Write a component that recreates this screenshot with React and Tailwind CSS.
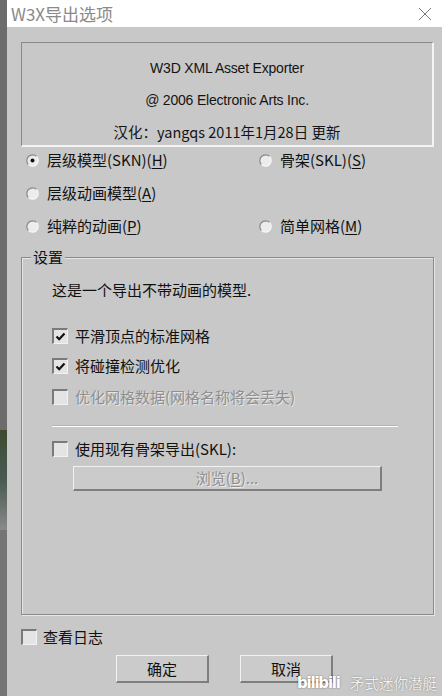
import React from "react";

const cjk = "font-['Noto_Sans_CJK_SC','Noto_Sans',sans-serif]";

const Radio = ({ checked }) => (
  <svg width="13" height="13" viewBox="0 0 13 13" className="shrink-0">
    <circle cx="6.5" cy="6.5" r="5.5" fill="#ececec" />
    <path d="M10.6 2.4 A5.8 5.8 0 0 0 2.4 10.6" stroke="#8a8a8a" strokeWidth="1.2" fill="none" />
    <path d="M2.4 10.6 A5.8 5.8 0 0 0 10.6 2.4" stroke="#f8f8f8" strokeWidth="1.2" fill="none" />
    {checked && <circle cx="6.5" cy="6.5" r="2" fill="#111" />}
  </svg>
);

const Checkbox = ({ checked }) => (
  <div className="w-[16px] h-[16px] shrink-0 border-t-2 border-l-2 border-b border-r border-t-[#7a7a7a] border-l-[#7a7a7a] border-b-[#f2f2f2] border-r-[#f2f2f2] bg-[#e4e4e4] flex items-center justify-center">
    {checked && (
      <svg width="11" height="11" viewBox="0 0 11 11">
        <path d="M1.5 5.5 L4.2 8.2 L9.5 2.5" stroke="#111" strokeWidth="2.2" fill="none" />
      </svg>
    )}
  </div>
);

const U = ({ children }) => <span className="underline underline-offset-2">{children}</span>;

const Button = ({ children, className = "", disabled }) => (
  <div
    className={`flex items-center justify-center border-t border-l border-t-[#f2f2f2] border-l-[#f2f2f2] border-b-2 border-r-2 border-b-[#7e7e7e] border-r-[#7e7e7e] bg-[#cbcbcb] text-[15px] leading-[20px] ${
      disabled ? "text-[#8f8f8f] [text-shadow:1px_1px_0_#ececec]" : "text-[#111]"
    } ${className}`}
  >
    {children}
  </div>
);

export default function App() {
  return (
    <div className={`flex w-[442px] h-[696px] overflow-hidden ${cjk}`}>
      {/* background strip behind the window */}
      <div className="w-[7px] shrink-0 flex flex-col bg-[#6c6c6c]">
        <div className="h-[430px]" />
        <div className="h-[100px] bg-gradient-to-b from-[#3c4a30] via-[#4a5a52] to-[#8a8a8a]" />
        <div className="flex-1 bg-[#757575]" />
      </div>

      <div className="flex-1 flex flex-col">
        {/* title bar */}
        <div className="h-[27px] bg-white flex items-center justify-between pl-[4px] pr-[10px]">
          <span className="text-[17px] leading-[22px] text-[#8a8a8a]">W3X导出选项</span>
          <svg width="14" height="14" viewBox="0 0 14 14">
            <path d="M1 1 L13 13 M13 1 L1 13" stroke="#7a7a7a" strokeWidth="1" />
          </svg>
        </div>

        {/* body */}
        <div className="flex-1 bg-[#c8c8c8] pl-[14px] pr-[8px] flex flex-col">
          <div className="mt-[15px] h-[105px] border-t border-l border-t-[#8a8a8a] border-l-[#8a8a8a] border-b-2 border-r-2 border-b-[#f4f4f4] border-r-[#f4f4f4] flex flex-col items-center text-[#141414]">
            <div className="mt-[14px] h-[22px] flex items-center text-[14px] font-['Liberation_Sans',sans-serif] tracking-[-0.2px]">
              W3D XML Asset Exporter
            </div>
            <div className="mt-[10px] h-[22px] flex items-center text-[14px] font-['Liberation_Sans',sans-serif] tracking-[-0.2px]">
              @ 2006 Electronic Arts Inc.
            </div>
            <div className="mt-[10px] h-[22px] flex items-center text-[14.5px]">
              汉化：yangqs 2011年1月28日 更新
            </div>
          </div>

          {/* radio options */}
          <div className="mt-[2px] pl-[5px] grid grid-cols-[233px_1fr] gap-y-[11px] text-[15px] leading-[20px] text-[#111]">
            <div className="h-[22px] flex items-center gap-[8px]">
              <Radio checked />
              <span>层级模型(SKN)(<U>H</U>)</span>
            </div>
            <div className="h-[22px] flex items-center gap-[8px]">
              <Radio />
              <span>骨架(SKL)(<U>S</U>)</span>
            </div>
            <div className="h-[22px] flex items-center gap-[8px] col-span-2">
              <Radio />
              <span>层级动画模型(<U>A</U>)</span>
            </div>
            <div className="h-[22px] flex items-center gap-[8px]">
              <Radio />
              <span>纯粹的动画(<U>P</U>)</span>
            </div>
            <div className="h-[22px] flex items-center gap-[8px]">
              <Radio />
              <span>简单网格(<U>M</U>)</span>
            </div>
          </div>

          {/* settings group */}
          <div className="relative mt-[20px] h-[358px] border border-[#8a8a8a] shadow-[inset_1px_1px_0_#e6e6e6,1px_1px_0_#e6e6e6] text-[15px] leading-[20px] text-[#111]">
            <span className="absolute -top-[11px] left-[9px] px-[2px] bg-[#c8c8c8]">设置</span>
            <div className="pl-[30px] flex flex-col">
              <div className="mt-[22px] h-[20px]">这是一个导出不带动画的模型.</div>
              <div className="mt-[25px] h-[22px] flex items-center gap-[7px]">
                <Checkbox checked />
                <span>平滑顶点的标准网格</span>
              </div>
              <div className="mt-[8px] h-[22px] flex items-center gap-[7px]">
                <Checkbox checked />
                <span>将碰撞检测优化</span>
              </div>
              <div className="mt-[9px] h-[22px] flex items-center gap-[7px]">
                <Checkbox />
                <span className="text-[#8f8f8f] [text-shadow:1px_1px_0_#e6e6e6]">优化网格数据(网格名称将会丢失)</span>
              </div>
              <div className="mt-[17px] w-[346px] h-[2px] border-t border-t-[#b4b4b4] border-b border-b-white" />
              <div className="mt-[11px] h-[22px] flex items-center gap-[7px]">
                <Checkbox />
                <span>使用现有骨架导出(SKL):</span>
              </div>
              <Button disabled className="mt-[6px] ml-[21px] w-[309px] h-[25px]">
                浏览(<U>B</U>)...
              </Button>
            </div>
          </div>

          <div className="mt-[12px] h-[20px] flex items-center gap-[6px] text-[15px] text-[#111]">
            <Checkbox />
            <span>查看日志</span>
          </div>

          <div className="relative mt-[8px] flex pl-[95px] gap-[31px]">
            <Button className="w-[93px] h-[28px]">确定</Button>
            <Button className="w-[93px] h-[28px]">取消</Button>
            <div className="absolute left-[276px] top-[19px] w-[145px] flex items-end text-white [text-shadow:0_0_2px_rgba(0,0,0,0.45)]">
              <span className="w-[53px] shrink-0 text-[15px] leading-[18px] font-bold font-['DejaVu_Sans',sans-serif] tracking-[-1.2px]">bilibili</span>
              <span className="text-[14.5px] leading-[18px] font-light whitespace-nowrap">矛式迷你潜艇</span>
            </div>
          </div>
        </div>
      </div>
    </div>
  );
}
